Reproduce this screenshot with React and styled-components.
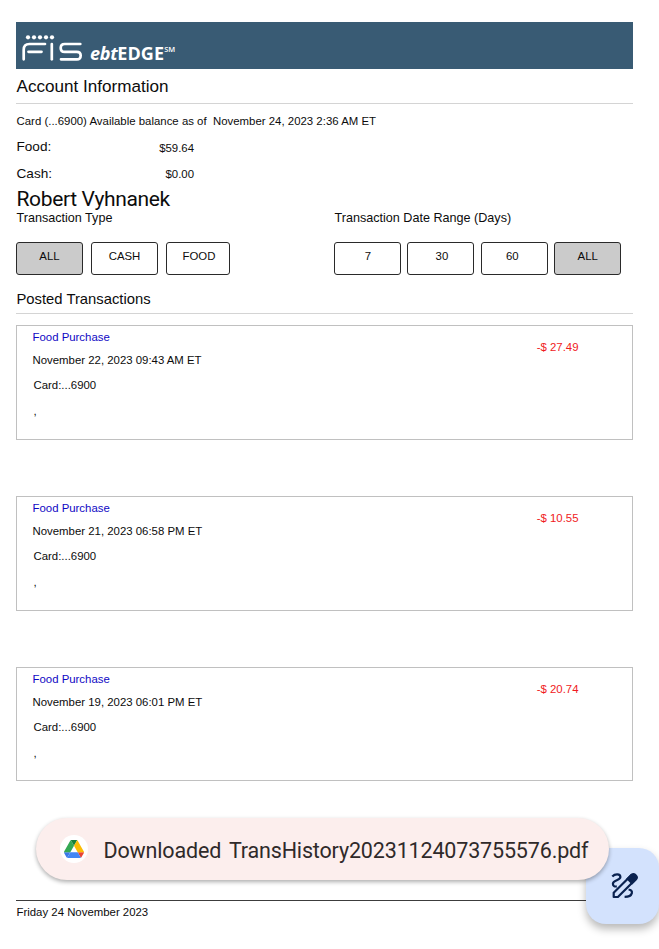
import React from 'react';
import styled, { createGlobalStyle } from 'styled-components';

const INK = '#0c0c0c';
const BORDER = '#c0c0c0';
const NAVY = '#395b74';

const GlobalStyle = createGlobalStyle`
  * {
    box-sizing: border-box;
  }
  body {
    margin: 0;
    background: #fff;
    color: ${INK};
    font-family: 'Liberation Sans', Arial, sans-serif;
    font-size: 11.4px;
    overflow: hidden;
  }
`;

const PageStyled = styled.main`
  position: relative;
  width: 659px;
  height: 949px;
  padding: 22px 26.5px 0 16px;
  overflow: hidden;
`;
const HeaderStyled = styled.header`
  display: flex;
  align-items: flex-start;
  height: 47px;
  padding: 12px 0 0 6px;
  background: ${NAVY};
  color: #fff;
`;
const ProductStyled = styled.div`
  display: flex;
  margin: 7px 0 0 6px;
  font-family: 'Open Sans', sans-serif;
  font-size: 18px;
  font-weight: 700;
  line-height: 24px;
  letter-spacing: 0.1px;
`;
const ProductPrefixStyled = styled.em`
  font-weight: 700;
  letter-spacing: -0.3px;
`;
const ServiceMarkStyled = styled.span`
  font-size: 7.5px;
  font-weight: 600;
  line-height: 17px;
  letter-spacing: 0;
`;
const SectionTitleStyled = styled.h2`
  margin: ${({ top }) => top || 0}px 0 0;
  padding-left: 0.5px;
  font-size: ${({ size }) => size}px;
  font-weight: 400;
  line-height: ${({ height }) => height}px;
  border-bottom: 1px solid #d4d4d4;
`;
const AsOfStyled = styled.p`
  margin: 5px 0 0 0.5px;
  line-height: 25px;
  letter-spacing: 0.01px;
  white-space: pre;
`;
const BalanceRowStyled = styled.div`
  display: flex;
  width: 178px;
  padding-left: 0.5px;
  justify-content: space-between;
  line-height: ${({ height }) => height}px;
`;
const BalanceLabelStyled = styled.span`
  font-size: 13.6px;
`;
const BalanceValueStyled = styled.span`
  padding-top: ${({ top }) => top}px;
`;
const HolderStyled = styled.div`
  height: 24px;
  padding: 1px 0 0 0.5px;
  font-family: Roboto, sans-serif;
  font-size: 21px;
  line-height: 23px;
  letter-spacing: -0.36px;
`;
const FiltersStyled = styled.section`
  display: grid;
  grid-template-columns: 318px auto;
`;
const FilterLabelStyled = styled.div`
  height: 31px;
  padding-left: 0.5px;
  font-size: 12.6px;
  line-height: 15px;
`;
const ButtonsStyled = styled.div`
  display: flex;
  gap: ${({ gap }) => gap}px;
`;
const FilterButtonStyled = styled.button`
  width: ${({ width }) => width || 67}px;
  height: 33px;
  padding: 0 0 5px;
  border: 1.5px solid #2a2a2a;
  border-radius: 3px;
  background: ${({ active }) => (active ? '#cbcbcb' : '#fff')};
  color: ${INK};
  font: inherit;
  text-indent: ${({ shift }) => shift || 0}px;
`;
const TransactionsStyled = styled.section`
  display: flex;
  flex-direction: column;
  gap: 56px;
  margin-top: 11px;
`;
const TransactionStyled = styled.article`
  display: flex;
  justify-content: space-between;
  height: 114.8px;
  padding: 0 53px 0 15.5px;
  border: 1.5px solid ${BORDER};
`;
const TransactionTypeStyled = styled.div`
  color: #0f08c4;
  line-height: 23px;
`;
const TransactionDateStyled = styled.div`
  line-height: 22px;
`;
const TransactionCardStyled = styled.div`
  padding-left: 1px;
  line-height: 28px;
`;
const TransactionPlaceStyled = styled.div`
  padding-left: 1px;
  line-height: 25px;
`;
const AmountStyled = styled.div`
  padding-top: 10px;
  color: #f01a22;
  line-height: 23px;
`;
const FooterStyled = styled.footer`
  margin-top: 119px;
  padding-left: 0.5px;
  border-top: 1.5px solid #3c3c3c;
  line-height: 23px;
`;
const EditButtonStyled = styled.button`
  position: absolute;
  left: 586px;
  top: 848px;
  width: 73px;
  height: 76px;
  padding: 0;
  border: 0;
  border-radius: 20px;
  background: #d3e2fd;
  box-shadow: 0 5px 9px rgba(0, 0, 0, 0.28);
`;
const ToastStyled = styled.div`
  position: absolute;
  left: 36px;
  top: 818px;
  display: flex;
  align-items: center;
  width: 573px;
  height: 62px;
  padding-left: 23.5px;
  border-radius: 31px;
  background: #fceeed;
  box-shadow: 0 2px 4px rgba(0, 0, 0, 0.32);
  color: #2f2a2a;
  font-family: Roboto, sans-serif;
  font-size: 21.5px;
  letter-spacing: -0.16px;
  word-spacing: 3px;
  white-space: nowrap;
`;
const ToastIconStyled = styled.span`
  display: flex;
  align-items: center;
  justify-content: center;
  width: 28px;
  height: 28px;
  margin-right: 16px;
  border-radius: 50%;
  background: #fff;
`;
const ToastTextStyled = styled.span`
  padding-top: 2px;
`;

const TYPES = [
  { label: 'ALL', active: true },
  { label: 'CASH' },
  { label: 'FOOD', width: 64, shift: 2 },
];

const RANGES = [
  { label: '7', shift: 1 },
  { label: '30', shift: 2 },
  { label: '60', shift: -4 },
  { label: 'ALL', active: true },
];

const TRANSACTIONS = [
  { date: 'November 22, 2023 09:43 AM ET', amount: '-$ 27.49' },
  { date: 'November 21, 2023 06:58 PM ET', amount: '-$ 10.55' },
  { date: 'November 19, 2023 06:01 PM ET', amount: '-$ 20.74' },
];

const FisLogo = () => (
  <svg width="62" height="28" viewBox="22 34 62 28" fill="none" stroke="#fff" strokeWidth="2.7" strokeLinecap="round">
    <g fill="#fff" stroke="none">
      {[28, 34, 40, 46, 52].map(x => (
        <circle key={x} cx={x} cy="37.3" r="2.1" />
      ))}
    </g>
    <path d="M23.7 59.3V49.8q0-5.8 5.8-5.8H45" />
    <path d="M28.5 51.8H41.5" />
    <path d="M51.8 44V59.3" />
    <path d="M80.3 44H64.7q-4 0-4 3.9t4 3.9H76.7q4 0 4 3.8T76.7 59.3H61" />
  </svg>
);

const DriveIcon = () => (
  <svg width="20" height="18" viewBox="0 0 87.3 78">
    <path fill="#3b78e7" d="m6.6 66.85 3.85 6.65c.8 1.4 1.95 2.5 3.3 3.3l13.75-23.8h-27.5c0 1.55.4 3.1 1.2 4.5z" />
    <path fill="#34a853" d="m43.65 25-13.75-23.8c-1.35.8-2.5 1.9-3.3 3.3l-25.4 44a9.06 9.06 0 0 0-1.2 4.5h27.5z" />
    <path fill="#ea4335" d="m73.55 76.8c1.35-.8 2.5-1.9 3.3-3.3l1.6-2.75 7.65-13.25c.8-1.4 1.2-2.95 1.2-4.5h-27.5l5.85 11.5z" />
    <path fill="#188038" d="m43.65 25 13.75-23.8c-1.35-.8-2.9-1.2-4.5-1.2h-18.5c-1.6 0-3.15.45-4.5 1.2z" />
    <path fill="#4285f4" d="m59.8 53h-32.3l-13.75 23.8c1.35.8 2.9 1.2 4.5 1.2h50.8c1.6 0 3.15-.45 4.5-1.2z" />
    <path fill="#fbbc04" d="m73.4 26.5-12.7-22c-.8-1.4-1.95-2.5-3.3-3.3l-13.75 23.8 16.15 28h27.45c0-1.55-.4-3.1-1.2-4.5z" />
  </svg>
);

const ScribbleIcon = () => (
  <svg width="73" height="76" viewBox="586 848 73 76" fill="none" stroke="#0a2250" strokeWidth="2.2">
    <path d="M612.3 876.4C615 873.6 620.4 873.6 620.4 877C620.4 880.6 612.9 879.8 612.9 883.8C612.9 886 614.6 886.8 616.8 886.4" />
    <path d="M613.7 897V892.8L631.5 875L635.7 879.2L617.9 897Z" strokeLinejoin="round" />
    <path d="M627.7 878.8L631.6 874.9Q633.4 873.2 635.2 874.9L636 875.7Q637.7 877.5 636 879.2L632 883.2Z" fill="#0a2250" />
    <path d="M628.6 889.8C633.6 889.2 633.6 896.9 624.6 896.9" />
  </svg>
);

const FilterGroup = ({ label, options, gap }) => (
  <div>
    <FilterLabelStyled>{label}</FilterLabelStyled>
    <ButtonsStyled gap={gap}>
      {options.map(({ label: text, active, width, shift }) => (
        <FilterButtonStyled key={text} active={active} width={width} shift={shift}>
          {text}
        </FilterButtonStyled>
      ))}
    </ButtonsStyled>
  </div>
);

const App = () => (
  <PageStyled>
    <GlobalStyle />
    <HeaderStyled>
      <FisLogo />
      <ProductStyled>
        <ProductPrefixStyled>ebt</ProductPrefixStyled>
        EDGE
        <ServiceMarkStyled>SM</ServiceMarkStyled>
      </ProductStyled>
    </HeaderStyled>
    <SectionTitleStyled size={17.1} height={33} top={1}>Account Information</SectionTitleStyled>
    <AsOfStyled>{'Card (...6900) Available balance as of  November 24, 2023 2:36 AM ET'}</AsOfStyled>
    <BalanceRowStyled height={26}>
      <BalanceLabelStyled>Food:</BalanceLabelStyled>
      <BalanceValueStyled top={1}>$59.64</BalanceValueStyled>
    </BalanceRowStyled>
    <BalanceRowStyled height={26}>
      <BalanceLabelStyled>Cash:</BalanceLabelStyled>
      <BalanceValueStyled top={0}>$0.00</BalanceValueStyled>
    </BalanceRowStyled>
    <HolderStyled>Robert Vyhnanek</HolderStyled>
    <FiltersStyled>
      <FilterGroup label="Transaction Type" options={TYPES} gap={8} />
      <FilterGroup label="Transaction Date Range (Days)" options={RANGES} gap={6.4} />
    </FiltersStyled>
    <SectionTitleStyled size={14.8} height={28} top={10}>Posted Transactions</SectionTitleStyled>
    <TransactionsStyled>
      {TRANSACTIONS.map(({ date, amount }) => (
        <TransactionStyled key={date}>
          <div>
            <TransactionTypeStyled>Food Purchase</TransactionTypeStyled>
            <TransactionDateStyled>{date}</TransactionDateStyled>
            <TransactionCardStyled>Card:...6900</TransactionCardStyled>
            <TransactionPlaceStyled>,</TransactionPlaceStyled>
          </div>
          <AmountStyled>{amount}</AmountStyled>
        </TransactionStyled>
      ))}
    </TransactionsStyled>
    <FooterStyled>Friday 24 November 2023</FooterStyled>
    <EditButtonStyled aria-label="Edit">
      <ScribbleIcon />
    </EditButtonStyled>
    <ToastStyled>
      <ToastIconStyled>
        <DriveIcon />
      </ToastIconStyled>
      <ToastTextStyled>Downloaded TransHistory20231124073755576.pdf</ToastTextStyled>
    </ToastStyled>
  </PageStyled>
);

export default App;
